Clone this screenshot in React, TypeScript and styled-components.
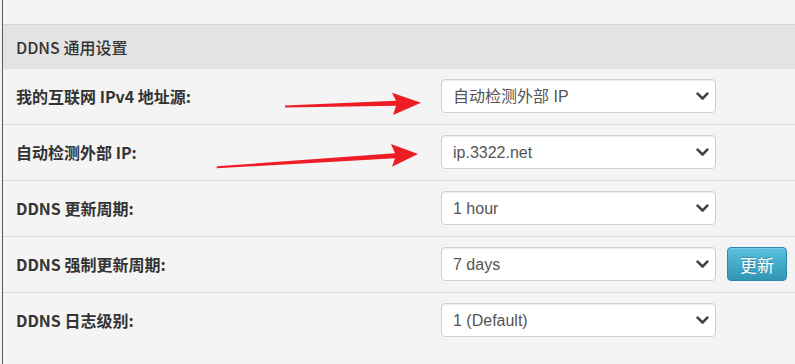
import styled, { createGlobalStyle } from "styled-components";

interface SettingRow {
  label: string;
  value: string;
  options: string[];
  action?: string;
}

const rows: SettingRow[] = [
  {
    label: "我的互联网 IPv4 地址源:",
    value: "自动检测外部 IP",
    options: ["自动检测外部 IP", "WAN 接口"],
  },
  {
    label: "自动检测外部 IP:",
    value: "ip.3322.net",
    options: ["ip.3322.net", "ifconfig.me"],
  },
  {
    label: "DDNS 更新周期:",
    value: "1 hour",
    options: ["1 hour", "2 hours", "6 hours"],
  },
  {
    label: "DDNS 强制更新周期:",
    value: "7 days",
    options: ["1 day", "7 days", "30 days"],
    action: "更新",
  },
  {
    label: "DDNS 日志级别:",
    value: "1 (Default)",
    options: ["0 (Quiet)", "1 (Default)", "2 (Verbose)"],
  },
];

const GlobalStyle = createGlobalStyle`
  html, body {
    margin: 0;
    padding: 0;
    background: #f4f4f4;
  }
  body {
    font-family: "Noto Sans CJK SC", "Liberation Sans", sans-serif;
  }
`;

const Page = styled.div`
  position: relative;
  width: 795px;
  height: 364px;
  overflow: hidden;
  background: #f4f4f4;
`;

const Panel = styled.div`
  margin-left: 2px;
  height: 100%;
  padding-top: 24px;
  border-left: 1px solid #5a5a5a;
  box-sizing: border-box;
`;

const SectionHeader = styled.div`
  height: 44px;
  display: flex;
  align-items: center;
  padding-left: 13px;
  border-top: 1px solid #d6d6d6;
  background: #e3e3e3;
  color: #333;
  font-size: 16px;
  font-weight: 500;
`;

const Row = styled.div`
  display: grid;
  grid-template-columns: 425px 275px auto;
  align-items: center;
  padding: 10px 0 11px 13px;
  border-bottom: 1px solid #dcdcdc;

  &:last-child {
    border-bottom: none;
  }
`;

const Label = styled.label`
  color: #333;
  font-size: 16px;
  font-weight: 700;
`;

const SelectWrap = styled.div`
  position: relative;
  width: 275px;
  height: 34px;
`;

const Select = styled.select`
  appearance: none;
  width: 100%;
  height: 100%;
  padding: 0 30px 0 11px;
  border: 1px solid #cfcfcf;
  border-radius: 4px;
  background: #fff;
  box-shadow: inset 0 1px 1px rgba(0, 0, 0, 0.075);
  color: #555;
  font-family: "Liberation Sans", "Noto Sans CJK SC", sans-serif;
  font-size: 16px;
  outline: none;
`;

const Chevron = styled.svg`
  position: absolute;
  right: 7px;
  top: 13px;
  pointer-events: none;
`;

const ActionButton = styled.button`
  margin-left: 11px;
  width: 60px;
  height: 34px;
  border: 1px solid #2a8cab;
  border-radius: 4px;
  background: linear-gradient(#5bc0de, #2f96b4);
  color: #fff;
  font-family: "Noto Sans CJK SC", sans-serif;
  font-size: 17px;
  text-shadow: 0 -1px 0 rgba(0, 0, 0, 0.2);
  box-shadow: inset 0 1px 0 rgba(255, 255, 255, 0.2);
`;

const Annotations = styled.svg`
  position: absolute;
  left: 0;
  top: 0;
  pointer-events: none;
`;

export default function App() {
  return (
    <Page>
      <GlobalStyle />
      <Panel>
        <SectionHeader>DDNS 通用设置</SectionHeader>
        {rows.map((row) => (
          <Row key={row.label}>
            <Label>{row.label}</Label>
            <SelectWrap>
              <Select defaultValue={row.value}>
                {row.options.map((opt) => (
                  <option key={opt}>{opt}</option>
                ))}
              </Select>
              <Chevron width="13" height="9" viewBox="0 0 13 9">
                <path
                  d="M1.6 1.6 L6.5 6.5 L11.4 1.6"
                  fill="none"
                  stroke="#444"
                  strokeWidth="2.6"
                  strokeLinecap="round"
                  strokeLinejoin="round"
                />
              </Chevron>
            </SelectWrap>
            {row.action && <ActionButton>{row.action}</ActionButton>}
          </Row>
        ))}
      </Panel>
      <Annotations width="795" height="364">
        <polygon
          points="285,105.6 396,100.8 392,92.7 421,102.7 393,115 396,105.8 285,107.6"
          fill="#ee1c25"
        />
        <polygon
          points="216.7,166.3 395,153.2 391,144 418,154 392,166.7 395,158.2 216.7,168.3"
          fill="#ee1c25"
        />
      </Annotations>
    </Page>
  );
}
